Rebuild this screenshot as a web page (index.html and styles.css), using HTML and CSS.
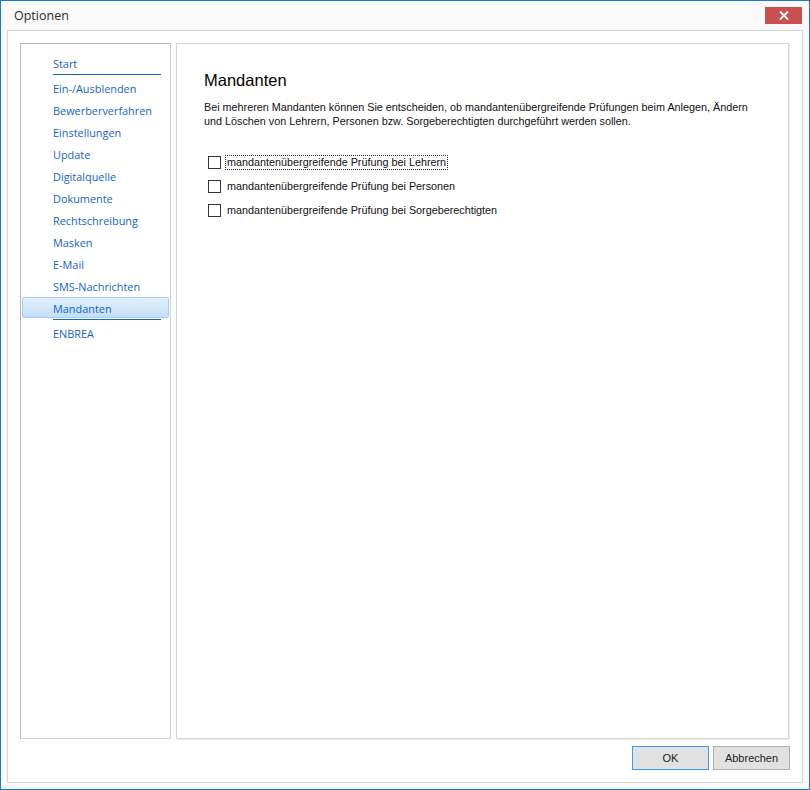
FILE: index.html
```html
<!DOCTYPE html>
<html lang="de">
<head>
  <meta charset="UTF-8" />
  <title>Optionen</title>
  <link rel="stylesheet" href="styles.css">
</head>
<body>
  <div class="window">
    <div class="titlebar">
      <span class="title">Optionen</span>
      <button class="close" aria-label="Schließen">
        <svg width="10" height="9" viewBox="0 0 10 9"><path d="M1 0.5 L9 8.5 M9 0.5 L1 8.5" stroke="#fff" stroke-width="1.8"/></svg>
      </button>
    </div>

    <div class="frame">
      <div class="panels">
        <ul class="nav">
          <li class="sep-after">Start</li>
          <li>Ein-/Ausblenden</li>
          <li>Bewerberverfahren</li>
          <li>Einstellungen</li>
          <li>Update</li>
          <li>Digitalquelle</li>
          <li>Dokumente</li>
          <li>Rechtschreibung</li>
          <li>Masken</li>
          <li>E-Mail</li>
          <li>SMS-Nachrichten</li>
          <li class="active sep-after">Mandanten</li>
          <li>ENBREA</li>
        </ul>

        <div class="content">
          <h2>Mandanten</h2>
          <p class="intro">Bei mehreren Mandanten können Sie entscheiden, ob mandantenübergreifende Prüfungen beim Anlegen, Ändern<br>und Löschen von Lehrern, Personen bzw. Sorgeberechtigten durchgeführt werden sollen.</p>

          <div class="checks">
            <label class="check"><span class="box"></span><span class="text focus">mandantenübergreifende Prüfung bei Lehrern</span></label>
            <label class="check"><span class="box"></span><span class="text">mandantenübergreifende Prüfung bei Personen</span></label>
            <label class="check"><span class="box"></span><span class="text">mandantenübergreifende Prüfung bei Sorgeberechtigten</span></label>
          </div>
        </div>
      </div>

      <div class="buttons">
        <button class="btn default">OK</button>
        <button class="btn">Abbrechen</button>
      </div>
    </div>
  </div>
</body>
</html>
```

FILE: styles.css
```css
* { box-sizing: border-box; }

body {
  margin: 0;
  background: #fff;
  font-family: "Liberation Sans", Arial, sans-serif;
}

.window {
  width: 810px;
  height: 790px;
  border: 1px solid #1979ca;
  background: #f9f9f9;
  display: flex;
  flex-direction: column;
}

.titlebar {
  height: 29px;
  display: flex;
  align-items: flex-start;
  justify-content: space-between;
  padding: 0 7px 0 13px;
}

.title {
  font-family: "Open Sans", "Noto Sans", sans-serif;
  font-size: 12.5px;
  color: #2b2b2b;
  margin-top: 6px;
}

.close {
  width: 37px;
  height: 17px;
  margin-top: 6px;
  border: none;
  background: #c75050;
  display: flex;
  align-items: center;
  justify-content: center;
  padding: 0;
}

.frame {
  width: 796px;
  height: 753px;
  margin: 0 6px;
  border: 1px solid #d6d6d6;
  background: #fff;
  padding: 12px 12px 0 12px;
}

.panels {
  display: flex;
  gap: 5px;
  height: 696px;
}

/* left navigation */
.nav {
  list-style: none;
  margin: 0;
  width: 151px;
  height: 100%;
  padding: 8px 1px 0 1px;
  border: 1px solid #c9d5de;
  border-top-color: #aabccb;
  border-left-color: #aabccb;
  font-family: "Open Sans", "Noto Sans", sans-serif;
  font-size: 10.9px;
  color: #1463c4;
}

.nav li {
  height: 22px;
  line-height: 21px;
  padding-left: 30px;
  border: 1px solid transparent;
  border-radius: 2px;
}

.nav li.sep-after {
  position: relative;
  margin-bottom: 3px;
}

.nav li.sep-after::after {
  content: "";
  position: absolute;
  left: 30px;
  top: 21px;
  width: 108px;
  height: 1px;
  background: #1466c8;
}

.nav li.active {
  background: linear-gradient(#e3f0fc, #c3dff8);
  border-color: #a6cdee;
  height: 21px;
  margin-bottom: 4px;
}

/* right content */
.content {
  width: 613px;
  height: 100%;
  border: 1px solid #d5d5d5;
  box-shadow: 1px 1px 0 #ececec;
  padding: 26px 27px;
  font-size: 10.8px;
  color: #111;
}

.content h2 {
  margin: 0;
  font-weight: normal;
  font-size: 16.5px;
  color: #000;
  line-height: 20px;
}

.intro {
  margin: 10px 0 0 0;
  line-height: 14px;
  white-space: nowrap;
}

.checks {
  margin-top: 27px;
  padding-left: 4px;
  display: flex;
  flex-direction: column;
  gap: 10px;
}

.check {
  display: flex;
  align-items: center;
  gap: 4px;
  height: 14px;
}

.box {
  width: 13px;
  height: 13px;
  border: 1px solid #333;
  background: #fff;
}

.text {
  padding: 0 1px;
  border: 1px solid transparent;
  line-height: 13px;
}

.text.focus {
  border: 1px dotted #333;
}

/* dialog buttons */
.buttons {
  display: flex;
  justify-content: flex-end;
  gap: 4px;
  margin-top: 7px;
}

.btn {
  width: 77px;
  height: 24px;
  border: 1px solid #adadad;
  background: #e1e1e1;
  font-family: "Liberation Sans", Arial, sans-serif;
  font-size: 11px;
  color: #222;
  padding: 0;
}

.btn.default {
  border-color: #3c9cf0;
}
```
